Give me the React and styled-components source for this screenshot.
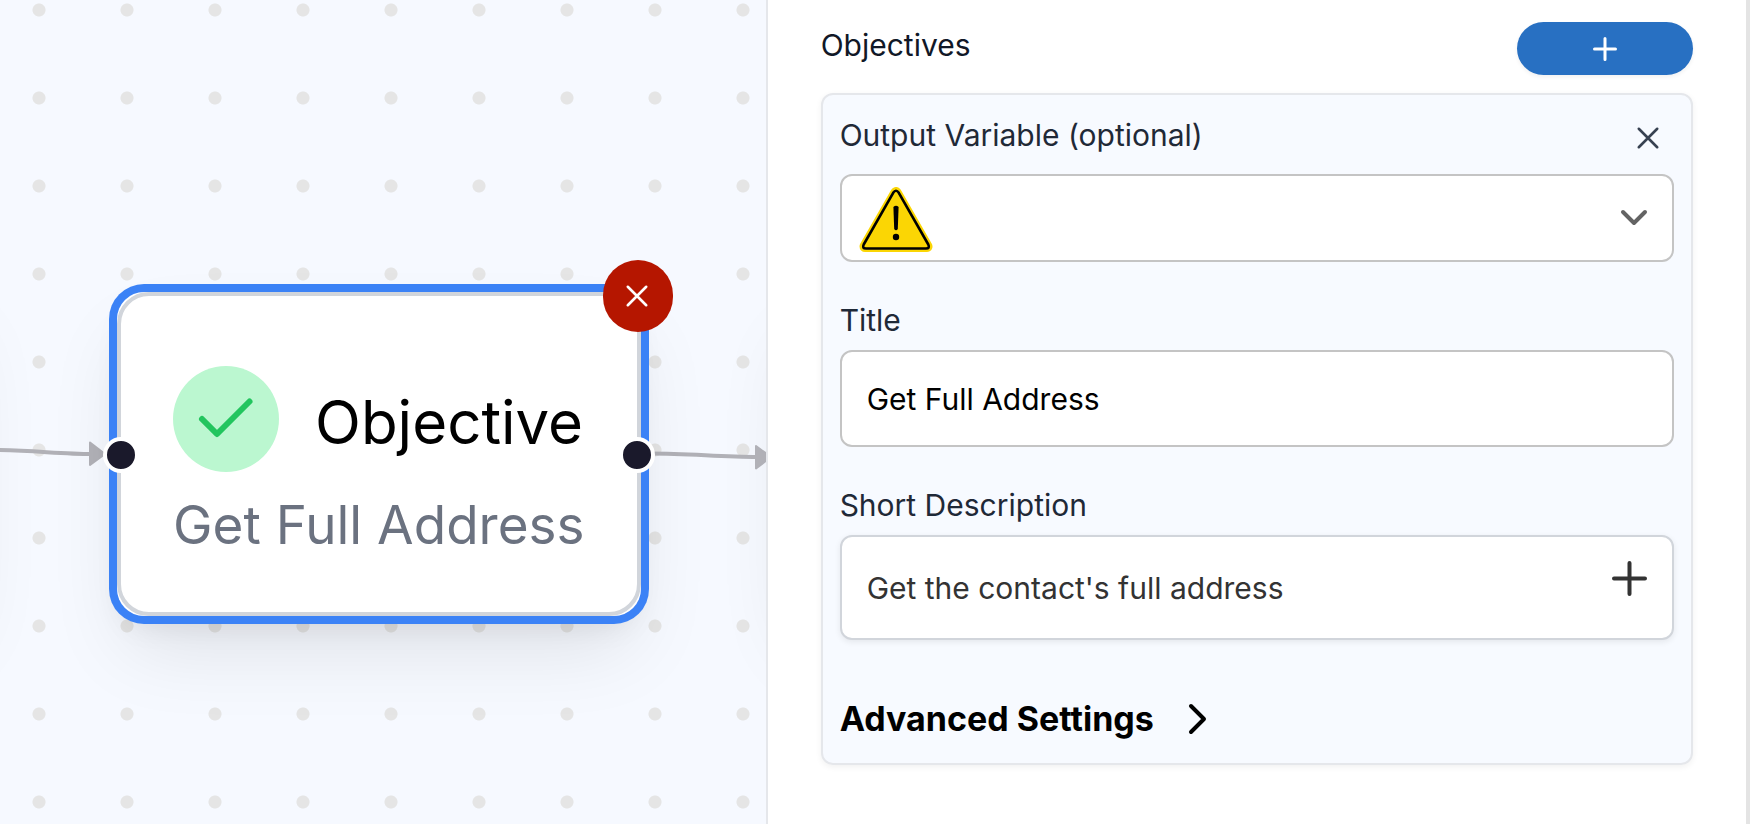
import styled, { createGlobalStyle } from "styled-components";

import React from "react";

const GlobalStyle = createGlobalStyle`
  * {
    box-sizing: border-box;
  }
  body {
    margin: 0;
    font-family: Inter, "Liberation Sans", sans-serif;
    background-color: white;
  }
  button, input, select, textarea {
    font-family: inherit;
  }
`;

const Page = styled.div`
  display: grid;
  grid-template-columns: 7fr 9fr;
  min-height: 100vh;
`;

const Canvas = styled.section`
  position: relative;
  overflow: hidden;
  background-color: #f6f9ff;
  background-image: radial-gradient(circle, #e5e5e5 6px, transparent 7px);
  background-size: 88px 88px;
  background-position: -5px -34px;
`;

const Edges = styled.svg`
  position: absolute;
  left: 0;
  top: 0;
  width: 100%;
  height: 100%;
`;

const Node = styled.article`
  position: absolute;
  left: ${(props) => `${props.$x}px`};
  top: ${(props) => `${props.$y}px`};
  width: 524px;
  height: 324px;
  border-radius: 27px;
  background-color: white;
  box-shadow: ${(props) => {
    return props.$selected ? "0 0 0 8px #3b82f6," : "";
  }}
    0 40px 80px -10px rgba(0, 0, 0, 0.1),
    0 16px 32px -10px rgba(0, 0, 0, 0.1);
`;

const NodeBody = styled.div`
  height: 100%;
  border: 4px solid #d1d5db;
  border-radius: 32px;
  padding: 70px 52px 0;
`;

const NodeHeader = styled.div`
  display: flex;
  align-items: center;
  gap: 36px;
`;

const CheckCircle = styled.div`
  flex: none;
  width: 106px;
  height: 106px;
  border-radius: 50%;
  background-color: #bbf7d0;
`;

const NodeTitle = styled.h2`
  margin: 0;
  padding-top: 6px;
  font-size: 60px;
  font-weight: 400;
  line-height: 72px;
  color: black;
`;

const NodeText = styled.p`
  margin: 16px 0 0;
  font-size: 53px;
  line-height: 74px;
  white-space: nowrap;
  color: #6b7280;
`;

const Handle = styled.span`
  position: absolute;
  top: 145px;
  ${(props) => `${props.$side}: -14px;`}
  width: 36px;
  height: 36px;
  border: 4px solid white;
  border-radius: 50%;
  background-color: #1a192b;
`;

const DeleteButton = styled.button`
  position: absolute;
  top: -32px;
  right: -32px;
  width: 70px;
  height: 72px;
  padding: 0 2px 0 0;
  border: none;
  border-radius: 36px;
  background-color: #b51600;
  color: white;
  display: flex;
  align-items: center;
  justify-content: center;
`;

const Panel = styled.aside`
  padding: 22px 53px;
  border-left: 2px solid #e5e7eb;
  border-right: 4px solid #e4e4e4;
  background-color: white;
`;

const PanelHeader = styled.header`
  display: flex;
  justify-content: space-between;
  margin-bottom: 18px;
`;

const PanelTitle = styled.h1`
  margin: 0;
  font-size: 30px;
  font-weight: 400;
  line-height: 46px;
  color: #111827;
`;

const AddButton = styled.button`
  width: 176px;
  height: 53px;
  padding: 0;
  border: none;
  border-radius: 27px;
  background-color: #2870c2;
  color: white;
  box-shadow: 0 2px 4px rgba(0, 0, 0, 0.06);
  display: flex;
  align-items: center;
  justify-content: center;
`;

const Card = styled.form`
  padding: 18px 17px;
  border: 2px solid #e5e7eb;
  border-radius: 12px;
  background-color: #f7faff;
  box-shadow: 0 2px 6px rgba(0, 0, 0, 0.06);
`;

const Field = styled.div`
  margin-bottom: 36px;
`;

const LabelRow = styled.div`
  display: flex;
  justify-content: space-between;
  align-items: flex-start;
`;

const Label = styled.label`
  display: block;
  margin-bottom: 8px;
  font-size: 30px;
  line-height: 44px;
  color: #1f2937;
`;

const RemoveButton = styled.button`
  width: 53px;
  height: 53px;
  margin-bottom: 8px;
  padding: 0;
  border: none;
  background: none;
  color: #374151;
`;

const Control = styled.div`
  position: relative;
`;

const Select = styled.select`
  display: block;
  width: 100%;
  height: 88px;
  padding: 0 100px;
  border: 2px solid #c4c4c4;
  border-radius: 12px;
  background-color: white;
  font-size: 30px;
  appearance: none;
`;

const TextInput = styled.input`
  display: block;
  width: 100%;
  height: 97px;
  padding: 0 25px;
  border: 2px solid #c4c4c4;
  border-radius: 12px;
  background-color: white;
  font-size: 30px;
  color: black;
`;

const TextArea = styled.textarea`
  display: block;
  width: 100%;
  height: 105px;
  padding: 30px 80px 30px 25px;
  border: 2px solid #d1d5db;
  border-radius: 12px;
  background-color: white;
  box-shadow: 0 2px 6px rgba(0, 0, 0, 0.08);
  font-size: 30px;
  line-height: 42px;
  color: #333333;
  resize: none;
  overflow: hidden;
`;

const WarningMark = styled.svg`
  position: absolute;
  left: 19px;
  top: 13px;
  pointer-events: none;
`;

const SelectArrow = styled.svg`
  position: absolute;
  right: 26px;
  top: 34px;
  pointer-events: none;
`;

const InsertButton = styled.button`
  position: absolute;
  top: 20px;
  right: 20px;
  width: 50px;
  height: 50px;
  padding: 0;
  border: none;
  background: none;
  color: #333333;
`;

const Advanced = styled.button`
  display: flex;
  align-items: center;
  gap: 34px;
  margin-top: 53px;
  padding: 0;
  border: none;
  background: none;
  font-size: 34px;
  font-weight: 700;
  line-height: 52px;
  color: black;
`;

function Cross({ box }) {
  return (
    <svg width={box} height={box} viewBox="0 0 24 24" aria-hidden="true">
      <path
        d="M3.500 3.500 L20.500 20.500 M20.500 3.500 L3.500 20.500"
        fill="none"
        stroke="currentColor"
        strokeWidth="2.4"
        strokeLinecap="round"
      />
    </svg>
  );
}

function Plus({ size, stroke }) {
  const mid = size / 2;
  const end = size - stroke / 2;
  return (
    <svg width={size} height={size} aria-hidden="true">
      <path
        d={`M${mid} ${stroke / 2} V${end} M${stroke / 2} ${mid} H${end}`}
        fill="none"
        stroke="currentColor"
        strokeWidth={stroke}
        strokeLinecap="round"
      />
    </svg>
  );
}

function Warning() {
  return (
    <WarningMark width="74" height="66" viewBox="0 0 74 66" aria-hidden="true">
      <path
        d="M37 5.5 L68 59.5 H6 Z"
        fill="#fbd604"
        stroke="#fbd604"
        strokeWidth="11"
        strokeLinejoin="round"
      />
      <path
        d="M34.2 5.8 Q37 1.8 39.8 5.8 L69.3 57.5 Q71.2 61.5 67 61.5 H7 Q2.8 61.5 4.7 57.5 Z"
        fill="#fbd604"
        stroke="black"
        strokeWidth="2.6"
        strokeLinejoin="round"
      />
      <path d="M34.4 20 Q37 17.4 39.6 20 L38.8 42 Q37 44.4 35.2 42 Z" fill="black" />
      <circle cx="37" cy="50" r="3.2" fill="black" />
    </WarningMark>
  );
}

function ObjectiveNode() {
  return (
    <Node $x={117} $y={292} $selected>
      <NodeBody>
        <NodeHeader>
          <CheckCircle>
            <svg width="106" height="106" aria-hidden="true">
              <path
                d="M29 53 L44 68 L76.500 35.500"
                fill="none"
                stroke="#22c55e"
                strokeWidth="6"
                strokeLinecap="round"
                strokeLinejoin="round"
              />
            </svg>
          </CheckCircle>
          <NodeTitle>Objective</NodeTitle>
        </NodeHeader>
        <NodeText>Get Full Address</NodeText>
      </NodeBody>
      <Handle $side="left" />
      <Handle $side="right" />
      <DeleteButton type="button" aria-label="Delete node">
        <Cross box={26} />
      </DeleteButton>
    </Node>
  );
}

export default function App() {
  return (
    <Page>
      <GlobalStyle />
      <Canvas>
        <Node $x={-552} $y={288} />
        <Node $x={786} $y={295} />
        <Edges aria-hidden="true">
          <g stroke="#b1b1b7" strokeWidth="4" fill="none">
            <path d="M-10 450 C30 450 60 454 92 454" />
            <path d="M650 453.500 C690 453.500 720 457 758 457" />
          </g>
          <g fill="#b1b1b7" stroke="#b1b1b7" strokeWidth="2" strokeLinejoin="round">
            <path d="M90 442.500 L105 454 L90 465 Z" />
            <path d="M756 446 L771 457 L756 468.500 Z" />
          </g>
        </Edges>
        <ObjectiveNode />
      </Canvas>
      <Panel>
        <PanelHeader>
          <PanelTitle>Objectives</PanelTitle>
          <AddButton type="button" aria-label="Add objective">
            <Plus size={24} stroke={3} />
          </AddButton>
        </PanelHeader>
        <Card>
          <Field>
            <LabelRow>
              <Label htmlFor="output">Output Variable (optional)</Label>
              <RemoveButton type="button" aria-label="Remove objective">
                <Cross box={26} />
              </RemoveButton>
            </LabelRow>
            <Control>
              <Select id="output" defaultValue="">
                <option value="" aria-label="None" />
              </Select>
              <Warning />
              <SelectArrow width="28" height="20" aria-hidden="true">
                <path
                  d="M3 4 L14 15 L25 4"
                  fill="none"
                  stroke="#636363"
                  strokeWidth="4"
                  strokeLinecap="round"
                  strokeLinejoin="round"
                />
              </SelectArrow>
            </Control>
          </Field>
          <Field>
            <Label htmlFor="title">Title</Label>
            <TextInput id="title" type="text" defaultValue="Get Full Address" />
          </Field>
          <Field>
            <Label htmlFor="description">Short Description</Label>
            <Control>
              <TextArea
                id="description"
                rows={1}
                defaultValue="Get the contact's full address"
              />
              <InsertButton type="button" aria-label="Insert variable">
                <Plus size={35} stroke={4} />
              </InsertButton>
            </Control>
          </Field>
          <Advanced type="button">
            Advanced Settings
            <svg width="20" height="34" aria-hidden="true">
              <path
                d="M3 4 L16 17 L3 30"
                fill="none"
                stroke="currentColor"
                strokeWidth="4"
                strokeLinecap="round"
                strokeLinejoin="round"
              />
            </svg>
          </Advanced>
        </Card>
      </Panel>
    </Page>
  );
}
